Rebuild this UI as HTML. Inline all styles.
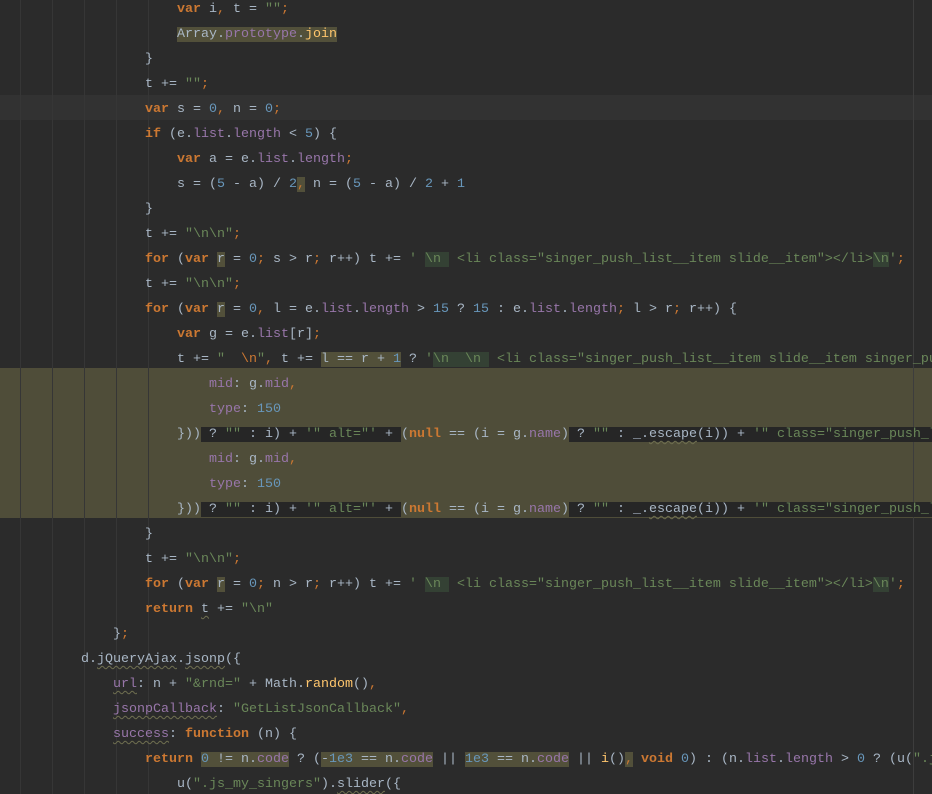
<!DOCTYPE html>
<html><head><meta charset="utf-8">
<style>
html,body{margin:0;padding:0;background:#2b2b2b;width:932px;height:794px;overflow:hidden}
#ed{position:relative;width:932px;height:794px;overflow:hidden;font-family:"Liberation Mono","Noto Sans CJK SC",monospace;font-size:13.33px;color:#a9b7c6}
.ln{position:absolute;left:0;width:932px;height:25px;line-height:25px;white-space:pre;transform:translateY(1px)}
.g{position:absolute;top:0;width:1px;height:794px;background:#363636}
.k{color:#cc7832;font-weight:bold}
.p{color:#cc7832}
.s{color:#6a8759}
.n{color:#6897bb}
.v{color:#9876aa}
.f{color:#ffc66d}
.h{background:#52503a}
.d{background:#262626}
.e{background:#344134}
.w{text-decoration:underline wavy #6f6f50;text-decoration-thickness:1px;text-underline-offset:3px}
</style></head><body><div id="ed">
<div style="position:absolute;left:0;top:95px;width:932px;height:25px;background:#323232"></div>
<div style="position:absolute;left:0;top:368px;width:932px;height:150px;background:#4f4d39"></div>
<div class="g" style="left:20px"></div><div class="g" style="left:52px"></div><div class="g" style="left:84px"></div><div class="g" style="left:116px"></div><div class="g" style="left:148px"></div>
<div style="position:absolute;left:913px;top:0;width:1px;height:794px;background:#3d3d3d"></div>
<div class="ln" style="top:-4px;padding-left:177px"><span class="k">var</span> i<span class="p">,</span> t = <span class="s">""</span><span class="p">;</span></div>
<div class="ln" style="top:21px;padding-left:177px"><span class="h">Array.<span class="v">prototype</span>.<span class="f">join</span></span></div>
<div class="ln" style="top:46px;padding-left:145px">}</div>
<div class="ln" style="top:71px;padding-left:145px">t += <span class="s">""</span><span class="p">;</span></div>
<div class="ln" style="top:96px;padding-left:145px"><span class="k">var</span> s = <span class="n">0</span><span class="p">,</span> n = <span class="n">0</span><span class="p">;</span></div>
<div class="ln" style="top:121px;padding-left:145px"><span class="k">if</span> (e.<span class="v">list</span>.<span class="v">length</span> &lt; <span class="n">5</span>) {</div>
<div class="ln" style="top:146px;padding-left:177px"><span class="k">var</span> a = e.<span class="v">list</span>.<span class="v">length</span><span class="p">;</span></div>
<div class="ln" style="top:171px;padding-left:177px">s = (<span class="n">5</span> - a) / <span class="n">2</span><span class="p h">,</span> n = (<span class="n">5</span> - a) / <span class="n">2</span> + <span class="n">1</span></div>
<div class="ln" style="top:196px;padding-left:145px">}</div>
<div class="ln" style="top:221px;padding-left:145px">t += <span class="s">"\n\n"</span><span class="p">;</span></div>
<div class="ln" style="top:246px;padding-left:145px"><span class="k">for</span> (<span class="k">var</span> <span class="h">r</span> = <span class="n">0</span><span class="p">;</span> s &gt; r<span class="p">;</span> r++) t += <span class="s">' <span class="e">\n </span> &lt;li class="singer_push_list__item slide__item"&gt;&lt;/li&gt;<span class="e">\n</span>'</span><span class="p">;</span></div>
<div class="ln" style="top:271px;padding-left:145px">t += <span class="s">"\n\n"</span><span class="p">;</span></div>
<div class="ln" style="top:296px;padding-left:145px"><span class="k">for</span> (<span class="k">var</span> <span class="h">r</span> = <span class="n">0</span><span class="p">,</span> l = e.<span class="v">list</span>.<span class="v">length</span> &gt; <span class="n">15</span> ? <span class="n">15</span> : e.<span class="v">list</span>.<span class="v">length</span><span class="p">;</span> l &gt; r<span class="p">;</span> r++) {</div>
<div class="ln" style="top:321px;padding-left:177px"><span class="k">var</span> g = e.<span class="v">list</span>[r]<span class="p">;</span></div>
<div class="ln" style="top:346px;padding-left:177px">t += <span class="s">"  <span class="p">\n</span>"</span><span class="p">,</span> t += <span class="h">l == r + <span class="n">1</span></span> ? <span class="s">'<span class="e">\n  \n </span> &lt;li class="singer_push_list__item slide__item singer_push_list__item</span></div>
<div class="ln" style="top:371px;padding-left:209px"><span class="v">mid</span>: g.<span class="v">mid</span><span class="p">,</span></div>
<div class="ln" style="top:396px;padding-left:209px"><span class="v">type</span>: <span class="n">150</span></div>
<div class="ln" style="top:421px;padding-left:177px">}))<span class="d"> ? <span class="s">""</span> : i) + <span class="s">'" alt="'</span> + </span>(<span class="k">null</span> == (i = g.<span class="v">name</span>)<span class="d"> ? <span class="s">""</span> : _.<span class="w">escape</span>(i)) + <span class="s">'" class="singer_push_list__item_pic</span>         </span></div>
<div class="ln" style="top:446px;padding-left:209px"><span class="v">mid</span>: g.<span class="v">mid</span><span class="p">,</span></div>
<div class="ln" style="top:471px;padding-left:209px"><span class="v">type</span>: <span class="n">150</span></div>
<div class="ln" style="top:496px;padding-left:177px">}))<span class="d"> ? <span class="s">""</span> : i) + <span class="s">'" alt="'</span> + </span>(<span class="k">null</span> == (i = g.<span class="v">name</span>)<span class="d"> ? <span class="s">""</span> : _.<span class="w">escape</span>(i)) + <span class="s">'" class="singer_push_list__item_pic</span>         </span></div>
<div class="ln" style="top:521px;padding-left:145px">}</div>
<div class="ln" style="top:546px;padding-left:145px">t += <span class="s">"\n\n"</span><span class="p">;</span></div>
<div class="ln" style="top:571px;padding-left:145px"><span class="k">for</span> (<span class="k">var</span> <span class="h">r</span> = <span class="n">0</span><span class="p">;</span> n &gt; r<span class="p">;</span> r++) t += <span class="s">' <span class="e">\n </span> &lt;li class="singer_push_list__item slide__item"&gt;&lt;/li&gt;<span class="e">\n</span>'</span><span class="p">;</span></div>
<div class="ln" style="top:596px;padding-left:145px"><span class="k">return</span> <span class="w">t</span> += <span class="s">"\n"</span></div>
<div class="ln" style="top:621px;padding-left:113px">}<span class="p">;</span></div>
<div class="ln" style="top:646px;padding-left:81px">d.<span class="w">jQueryAjax</span>.<span class="w">jsonp</span>({</div>
<div class="ln" style="top:671px;padding-left:113px"><span class="v w">url</span>: n + <span class="s">"&amp;rnd="</span> + Math.<span class="f">random</span>()<span class="p">,</span></div>
<div class="ln" style="top:696px;padding-left:113px"><span class="v w">jsonpCallback</span>: <span class="s">"GetListJsonCallback"</span><span class="p">,</span></div>
<div class="ln" style="top:721px;padding-left:113px"><span class="v w">success</span>: <span class="k">function</span> (n) {</div>
<div class="ln" style="top:746px;padding-left:145px"><span class="k">return</span> <span class="h"><span class="n">0</span> != n.<span class="v">code</span></span> ? (<span class="h">-<span class="n">1e3</span> == n.<span class="v">code</span></span> || <span class="h"><span class="n">1e3</span> == n.<span class="v">code</span></span> || <span class="f">i</span>()<span class="p h">,</span> <span class="k">void</span> <span class="n">0</span>) : (n.<span class="v">list</span>.<span class="v">length</span> &gt; <span class="n">0</span> ? (u(<span class="s">".js</span></div>
<div class="ln" style="top:771px;padding-left:177px">u(<span class="s">".js_my_singers"</span>).<span class="w">slider</span>({</div>
</div></body></html>
